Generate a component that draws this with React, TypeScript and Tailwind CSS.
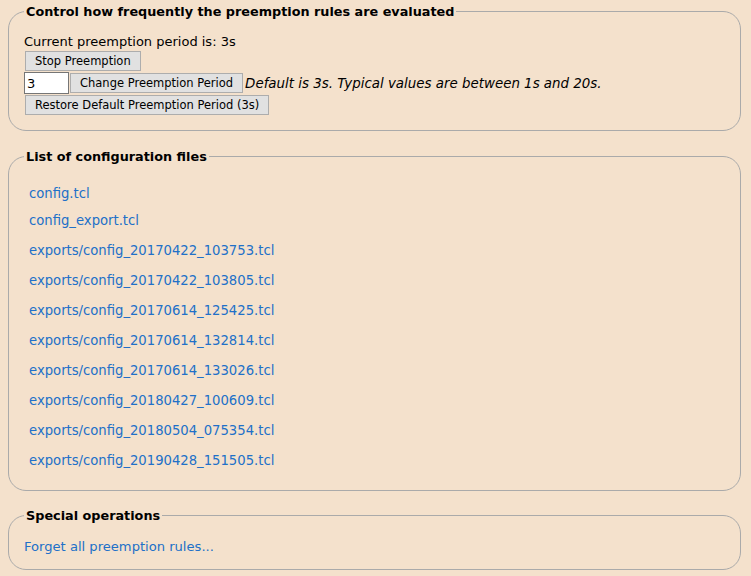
const configFiles = [
  { name: "config.tcl", gap: "mt-[22px]" },
  { name: "config_export.tcl", gap: "mt-[12px]" },
  { name: "exports/config_20170422_103753.tcl", gap: "mt-[15px]" },
  { name: "exports/config_20170422_103805.tcl", gap: "mt-[15px]" },
  { name: "exports/config_20170614_125425.tcl", gap: "mt-[15px]" },
  { name: "exports/config_20170614_132814.tcl", gap: "mt-[15px]" },
  { name: "exports/config_20170614_133026.tcl", gap: "mt-[15px]" },
  { name: "exports/config_20180427_100609.tcl", gap: "mt-[15px]" },
  { name: "exports/config_20180504_075354.tcl", gap: "mt-[15px]" },
  { name: "exports/config_20190428_151505.tcl", gap: "mt-[15px]" },
];

function Btn({ children }: { children: React.ReactNode }) {
  return (
    <button className="ml-px h-[20px] border border-[#adadad] bg-[#e1e1e1] px-[9px] text-[11.5px] leading-[18px] text-black">
      {children}
    </button>
  );
}

export default function App() {
  return (
    <div className="min-h-screen bg-[#f4e1cc] pb-2 pl-2 pr-[10px] pt-1 font-['DejaVu_Sans',Verdana,sans-serif] text-[13px] leading-[15px] text-black">
      <fieldset className="rounded-[18px] border border-[#aaaaaa] px-[15px] pb-[15px]">
        <legend className="px-0.5 text-[12.8px] font-bold">
          Control how frequently the preemption rules are evaluated
        </legend>
        <div className="mt-[15px]">Current preemption period is: 3s</div>
        <div className="mt-[2px] flex">
          <Btn>Stop Preemption</Btn>
        </div>
        <div className="mt-px flex items-center">
          <input
            defaultValue="3"
            className="h-[22px] w-[45px] border border-[#767676] bg-white px-[2px] text-[13px] outline-none"
          />
          <Btn>Change Preemption Period</Btn>
          <span className="ml-[2px] text-[13.4px] italic">
            Default is 3s. Typical values are between 1s and 20s.
          </span>
        </div>
        <div className="mt-px flex">
          <Btn>Restore Default Preemption Period (3s)</Btn>
        </div>
      </fieldset>

      <fieldset className="mt-[18px] rounded-[18px] border border-[#aaaaaa] px-[15px] pb-[22px]">
        <legend className="px-0.5 text-[12.8px] font-bold">List of configuration files</legend>
        <div className="pl-[5px]">
          {configFiles.map((f) => (
            <div key={f.name} className={f.gap}>
              <a href="#" className="text-[13.2px] text-[#2170c8]">
                {f.name}
              </a>
            </div>
          ))}
        </div>
      </fieldset>

      <fieldset className="mt-[17px] rounded-[18px] border border-[#aaaaaa] px-[15px] pb-[15px]">
        <legend className="px-0.5 text-[12.8px] font-bold">Special operations</legend>
        <div className="mt-[16px]">
          <a href="#" className="text-[13.1px] text-[#2170c8]">
            Forget all preemption rules...
          </a>
        </div>
      </fieldset>
    </div>
  );
}
